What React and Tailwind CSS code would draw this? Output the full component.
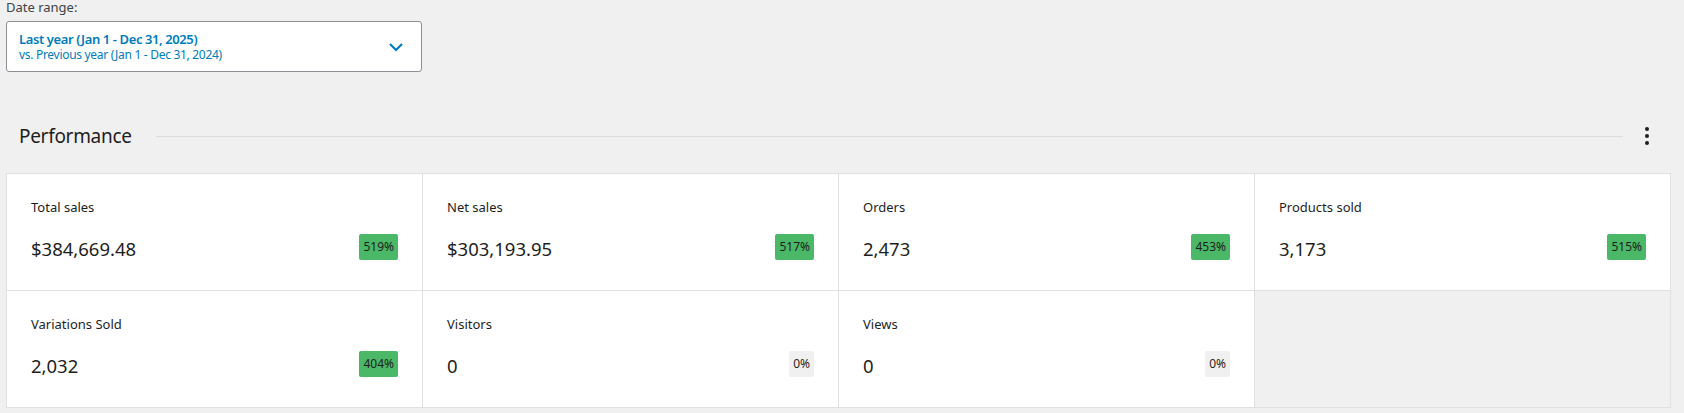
import React from "react";

const items = [
  { label: "Total sales", value: "$384,669.48", delta: "519%", up: true },
  { label: "Net sales", value: "$303,193.95", delta: "517%", up: true },
  { label: "Orders", value: "2,473", delta: "453%", up: true },
  { label: "Products sold", value: "3,173", delta: "515%", up: true },
  { label: "Variations Sold", value: "2,032", delta: "404%", up: true },
  { label: "Visitors", value: "0", delta: "0%", up: false },
  { label: "Views", value: "0", delta: "0%", up: false },
];

function Cell({ item }) {
  return (
    <div className="h-[117px] bg-white border-r border-b border-[#e0e0e0] px-[24px] pt-[24px]">
      <div className="text-[13px] leading-[18px] text-[#1e1e1e]">{item.label}</div>
      <div className="mt-[18px] flex items-start justify-between">
        <div className="mt-[1px] text-[18.5px] leading-[28px] text-[#1e1e1e]">{item.value}</div>
        <div
          className={
            item.up
              ? "h-[26px] px-[4px] rounded-[2px] bg-[#4ab866] text-[#1e1e1e] text-[12px] flex items-center"
              : "h-[26px] px-[4px] rounded-[2px] bg-[#f0f0f0] text-[#1e1e1e] text-[12px] flex items-center"
          }
        >
          {item.delta}
        </div>
      </div>
    </div>
  );
}

export default function App() {
  return (
    <div
      className="w-full h-[413px] bg-[#f0f0f0] overflow-hidden"
      style={{ fontFamily: '"Noto Sans", "Open Sans", sans-serif' }}
    >
      <div className="pl-[6px]">
        <div className="text-[13px] leading-[14px] text-[#3c434a]">Date range:</div>
        <div className="mt-[7px] w-[416px] h-[51px] bg-white border border-[#8c8f94] rounded-[3px] flex items-center justify-between pl-[12px] pr-[17px]">
          <div className="flex flex-col">
            <span className="text-[13px] leading-[16px] font-semibold text-[#007cba] tracking-[-0.4px]">
              Last year (Jan 1 - Dec 31, 2025)
            </span>
            <span className="text-[12px] leading-[15px] text-[#007cba] tracking-[-0.3px]">
              vs. Previous year (Jan 1 - Dec 31, 2024)
            </span>
          </div>
          <svg width="16" height="10" viewBox="0 0 16 10" fill="none">
            <path d="M2 2 L8 8 L14 2" stroke="#007cba" strokeWidth="2.2" />
          </svg>
        </div>
      </div>

      <div className="ml-[6px] w-[1665px] mt-[50px] h-[28px] flex items-center">
        <div className="w-[150px] pl-[13px] text-[19px] leading-[28px] text-[#1e1e1e] tracking-[-0.3px]">
          Performance
        </div>
        <div className="flex-1 h-px bg-[#dcdcde]" />
        <div className="w-[48px] flex justify-center">
          <svg width="4" height="18" viewBox="0 0 4 18">
            <circle cx="2" cy="2" r="2" fill="#1e1e1e" />
            <circle cx="2" cy="9" r="2" fill="#1e1e1e" />
            <circle cx="2" cy="16" r="2" fill="#1e1e1e" />
          </svg>
        </div>
      </div>

      <div className="ml-[6px] mt-[23px] w-[1665px] grid grid-cols-4 border-l border-t border-[#e0e0e0]">
        {items.map((it) => (
          <Cell key={it.label} item={it} />
        ))}
        <div className="h-[117px] border-r border-b border-[#e0e0e0]" />
      </div>
    </div>
  );
}
